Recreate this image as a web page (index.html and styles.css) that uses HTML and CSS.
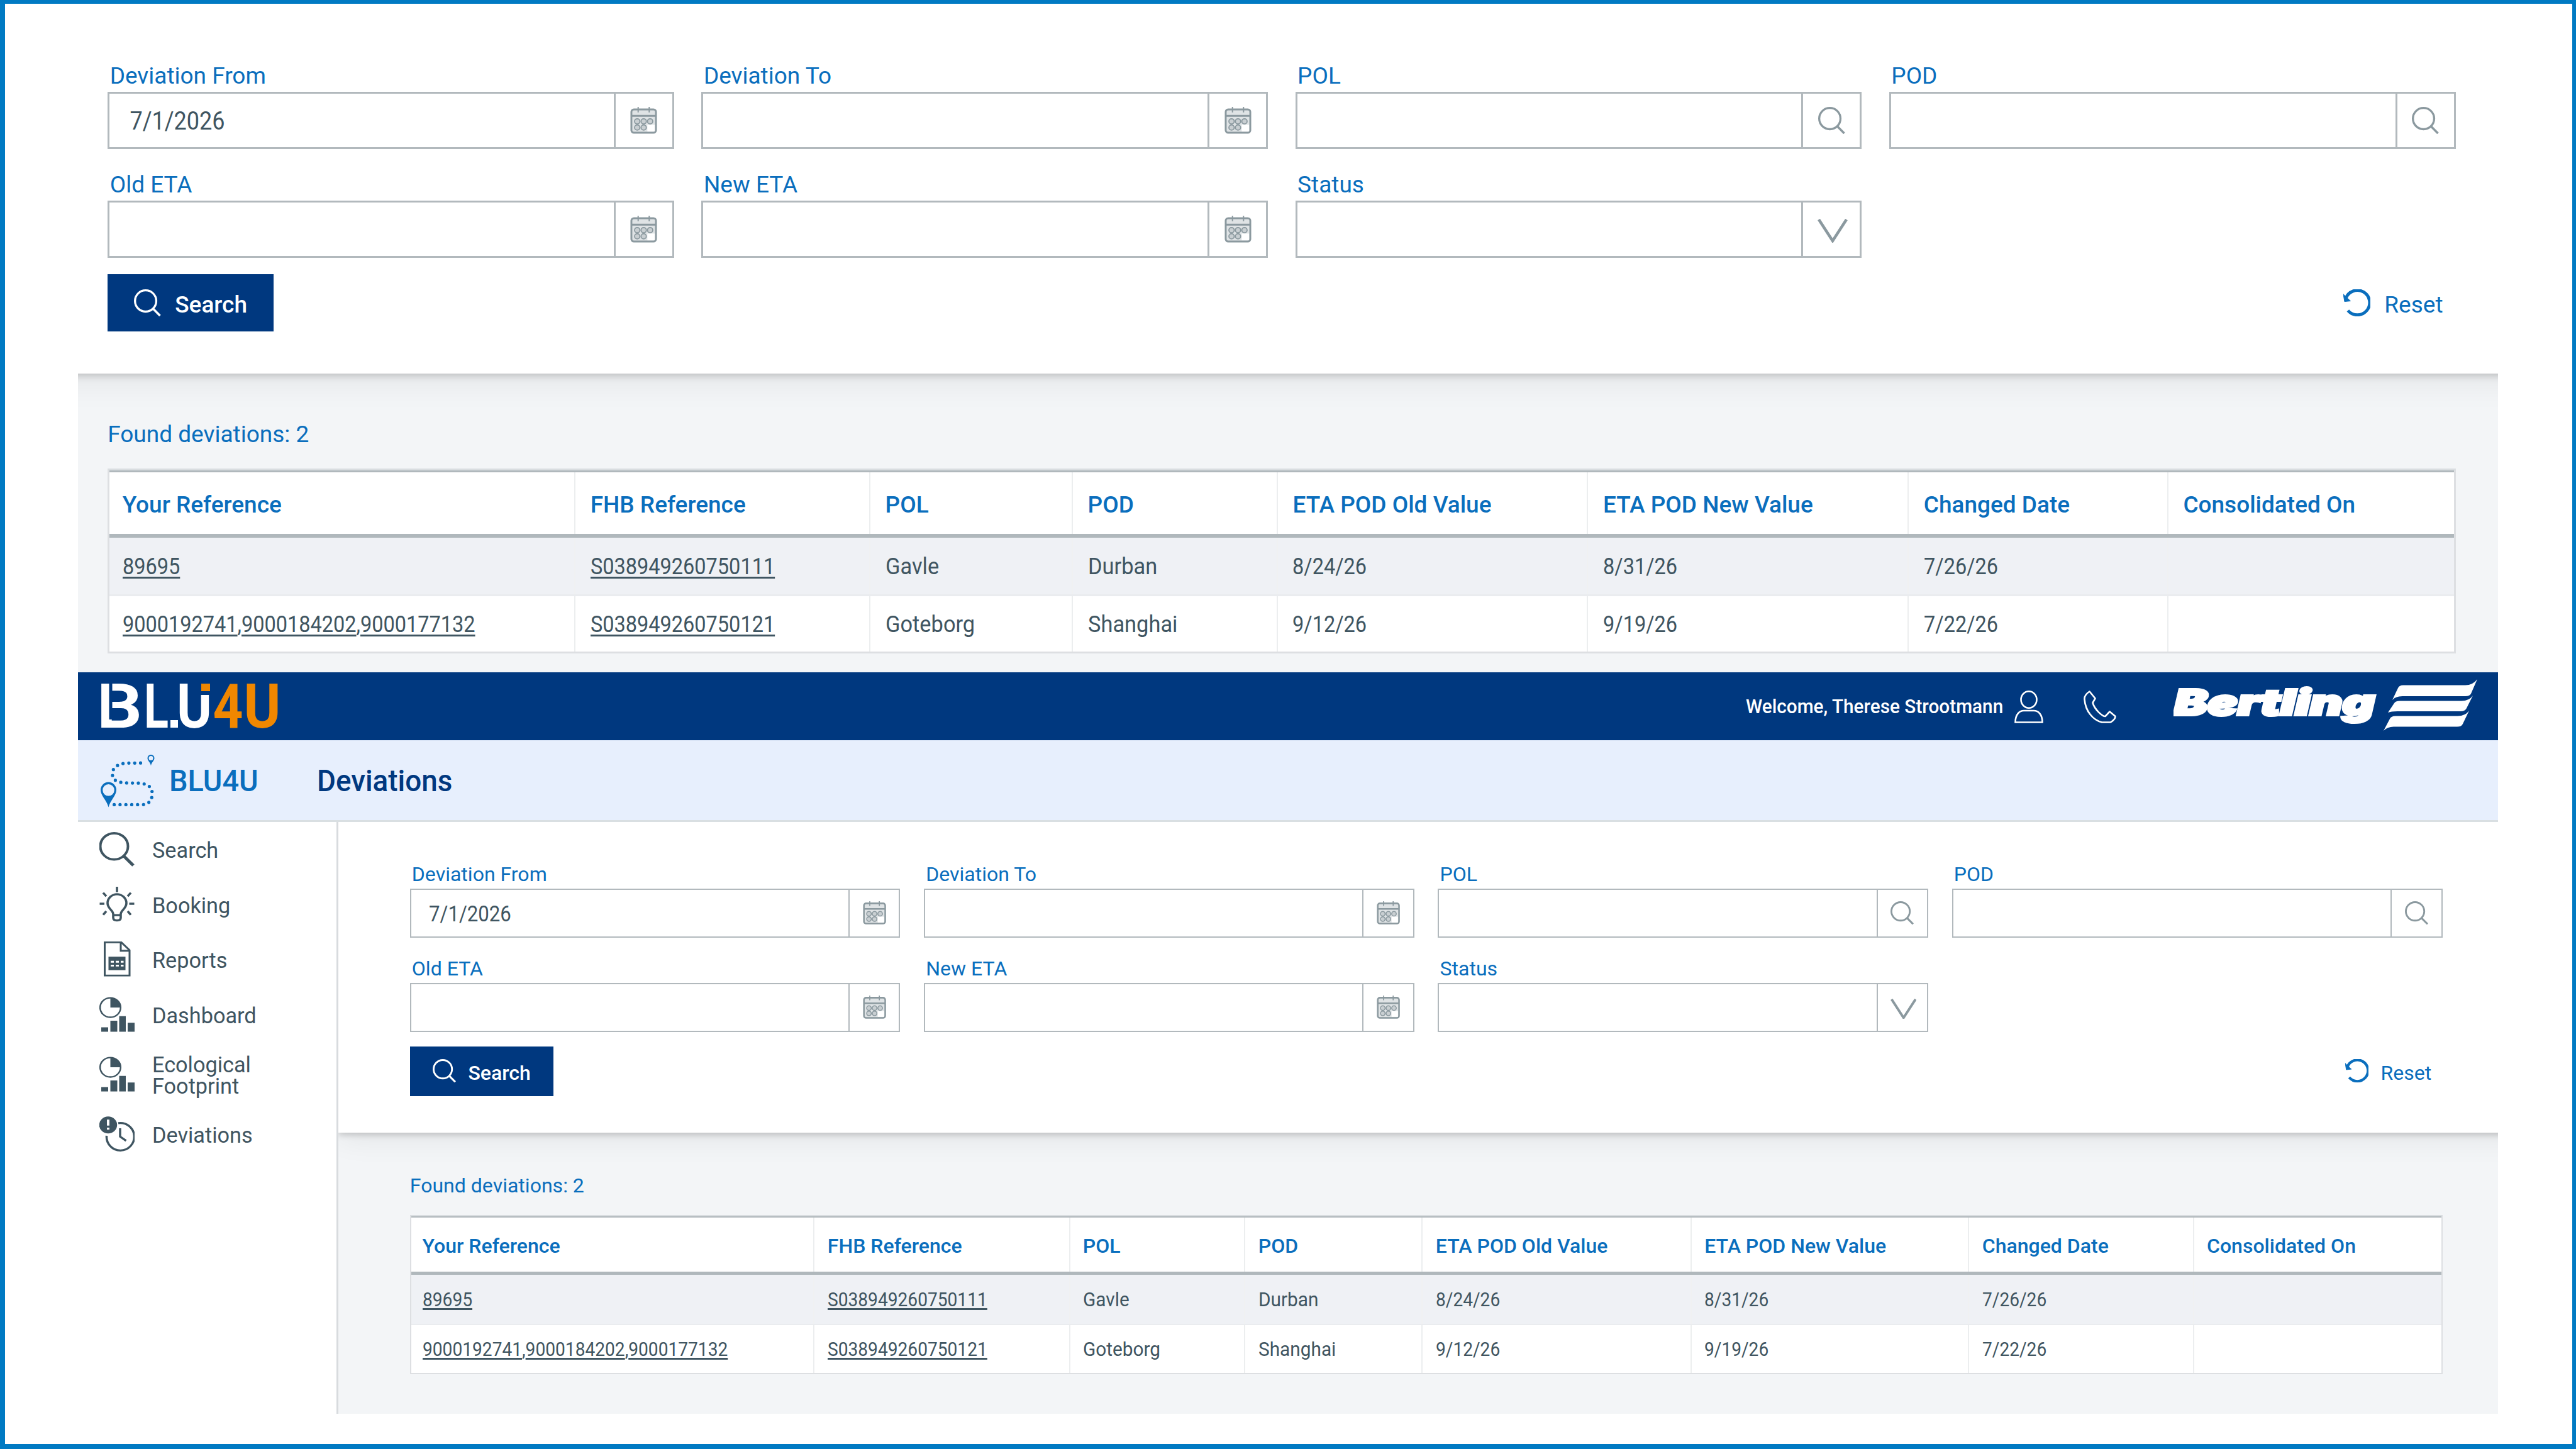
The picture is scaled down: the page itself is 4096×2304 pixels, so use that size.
FILE: index.html
```html
<!DOCTYPE html>
<html lang="en">
<head>
  <meta charset="UTF-8" />
  <meta name="viewport" content="width=device-width, initial-scale=1.0"/>
  <title>BLU4U - Deviations</title>
  <link rel="stylesheet" href="styles.css">
</head>
<body>
  <!-- Shared icons -->
  <svg width="0" height="0" class="sprite">
    <symbol id="i-search" viewBox="0 0 44 44">
      <circle cx="19" cy="19" r="17.3" fill="none" stroke="currentColor" stroke-width="3.4"/>
      <path d="M31 31.5L42.5 43" fill="none" stroke="currentColor" stroke-width="3.6"/>
    </symbol>
    <symbol id="i-cal" viewBox="0 0 44 44">
      <rect x="2" y="4" width="40" height="38" rx="4" fill="#dfe3e5" stroke="currentColor" stroke-width="3"/>
      <path d="M2 14.5H42" stroke="currentColor" stroke-width="3"/>
      <path d="M13 0V9M31 0V9" stroke="currentColor" stroke-width="2"/>
      <rect x="28" y="29" width="12" height="11" fill="#fff"/>
      <g fill="#c9cfd2" stroke="currentColor" stroke-width="1.8">
        <circle cx="11.5" cy="23.5" r="4.3"/><circle cx="22" cy="23.5" r="4.3"/><circle cx="32.5" cy="23.5" r="4.3"/>
        <circle cx="11.5" cy="33.5" r="4.3"/><circle cx="22" cy="33.5" r="4.3"/>
      </g>
    </symbol>
    <symbol id="i-down" viewBox="0 0 48 38">
      <path d="M2 1L24 35L46 1" fill="none" stroke="currentColor" stroke-width="4.5"/>
    </symbol>
    <symbol id="i-reset" viewBox="0 0 44 44">
      <path d="M4 15A20 20 0 1 1 7.500 34.500" fill="none" stroke="currentColor" stroke-width="5"/>
      <path d="M0 7.500L2 20L12 19" fill="currentColor" stroke="currentColor" stroke-width="1"/>
    </symbol>
    <symbol id="i-chart" viewBox="0 0 56 59">
      <circle cx="17.5" cy="18" r="16.3" fill="none" stroke="currentColor" stroke-width="2.5"/>
      <path d="M17.500 18V1.500A16.500 16.500 0 0 1 34 18Z" fill="currentColor"/>
      <path d="M3 51H14V58.500H3ZM17.500 40H28.500V58.500H17.500ZM31.500 32.500H42V58.500H31.500ZM45 43.500H56V58.500H45Z" fill="currentColor"/>
    </symbol>
  </svg>

  <div class="page">
    <!-- Deviations search, enlarged -->
    <section class="view view-large">
      <div class="panel">
        <div class="fields">
          <div class="field"><label>Deviation From</label><div class="input"><span class="value">7/1/2026</span><i class="addon"><svg class="ico"><use href="#i-cal"/></svg></i></div></div>
          <div class="field"><label>Deviation To</label><div class="input"><i class="addon"><svg class="ico"><use href="#i-cal"/></svg></i></div></div>
          <div class="field"><label>POL</label><div class="input"><i class="addon"><svg class="ico"><use href="#i-search"/></svg></i></div></div>
          <div class="field"><label>POD</label><div class="input"><i class="addon"><svg class="ico"><use href="#i-search"/></svg></i></div></div>
          <div class="field"><label>Old ETA</label><div class="input"><i class="addon"><svg class="ico"><use href="#i-cal"/></svg></i></div></div>
          <div class="field"><label>New ETA</label><div class="input"><i class="addon"><svg class="ico"><use href="#i-cal"/></svg></i></div></div>
          <div class="field"><label>Status</label><div class="input"><i class="addon"><svg class="ico ico-down"><use href="#i-down"/></svg></i></div></div>
        </div>
        <div class="actions">
          <button class="btn"><svg class="ico"><use href="#i-search"/></svg><span>Search</span></button>
          <a class="reset"><svg class="ico"><use href="#i-reset"/></svg><span>Reset</span></a>
        </div>
      </div>
      <div class="results">
        <p class="found">Found deviations: 2</p>
        <div class="table">
          <div class="row head">
            <div>Your Reference</div><div>FHB Reference</div><div>POL</div><div>POD</div><div>ETA POD Old Value</div><div>ETA POD New Value</div><div>Changed Date</div><div>Consolidated On</div>
          </div>
          <div class="row odd">
            <div><span class="num"><u>89695</u></span></div><div><span class="num"><u>S038949260750111</u></span></div><div><span>Gavle</span></div><div><span>Durban</span></div><div><span class="num">8/24/26</span></div><div><span class="num">8/31/26</span></div><div><span class="num">7/26/26</span></div><div></div>
          </div>
          <div class="row">
            <div><span class="num"><u>9000192741</u>,<u>9000184202</u>,<u>9000177132</u></span></div><div><span class="num"><u>S038949260750121</u></span></div><div><span>Goteborg</span></div><div><span>Shanghai</span></div><div><span class="num">9/12/26</span></div><div><span class="num">9/19/26</span></div><div><span class="num">7/22/26</span></div><div></div>
          </div>
        </div>
      </div>
    </section>

    <!-- Top bar -->
    <header class="topbar">
      <svg class="logo" viewBox="0 0 283 70">
        <g class="logo-text">
          <text x="-6" y="70" textLength="72" lengthAdjust="spacingAndGlyphs">B</text>
          <text x="69" y="70" textLength="39" lengthAdjust="spacingAndGlyphs">L</text>
          <text x="121" y="70" textLength="56" lengthAdjust="spacingAndGlyphs">U</text>
          <text class="orange" x="178.500" y="70" textLength="48" lengthAdjust="spacingAndGlyphs">4</text>
          <text class="orange" x="227.500" y="70" textLength="59" lengthAdjust="spacingAndGlyphs">U</text>
        </g>
        <rect x="111" y="58" width="12" height="12" fill="#fff"/>
        <rect x="13.500" y="-1" width="5" height="58" fill="#00387f"/>
        <rect x="158" y="-1" width="17" height="19" fill="#00387f"/>
        <rect x="160" y="0" width="14" height="12" fill="#f08700"/>
      </svg>
      <div class="user">
        <div class="welcome"><span>Welcome, Therese Strootmann</span></div>
        <svg class="ico-user" viewBox="0 0 46 52" fill="none" stroke="#fff" stroke-width="2.6">
          <ellipse cx="23" cy="14.500" rx="12.500" ry="13.200"/>
          <path d="M1.500 50.500C1.500 38 8 32 15 32H31C38 32 44.500 38 44.500 50.500Z"/>
        </svg>
        <svg class="ico-phone" viewBox="0 0 52 52" fill="none" stroke="#fff" stroke-width="2.600" stroke-linejoin="round">
          <path d="M9.500 1.500C4 5 1 9 1.500 14C3 33 15 47 29 50.500H43C47 48 50.500 45 50.500 41L41.500 33.500L34.500 41C30 41 18 31 14.500 19.500L18.500 12.500Z"/>
        </svg>
        <svg class="bertling" viewBox="0 0 484 84">
          <text class="bertling-text" x="1" y="57.500" textLength="319" lengthAdjust="spacingAndGlyphs">Bertling</text>
          <g fill="#fff" transform="translate(334 1)">
            <path d="M14 33L23 14Q25 9.500 31 9.500H130Q142 9.500 149 0L139 23Q137 27 130 27H30Q19 27 14 33Z"/>
            <path d="M7 53L17 38Q19 34.500 26 34.500H124Q136 34.500 142 26L132 46Q130 51 122 51H23Q12 51 7 53Z"/>
            <path d="M0 82L10 63Q12 58.500 19 58.500H118Q130 58.500 136 50L126 71Q124 75.500 117 75.500H16Q6 75.500 0 82Z"/>
          </g>
        </svg>
      </div>
    </header>

    <div class="subbar">
      <svg class="ico-route" viewBox="0 0 86 84" fill="none">
        <path d="M63.500 13.200L42 13.400C26 14 18.700 22 18.700 30C18.700 41 26 44 42 45L60 45.200C76 46 82 52 82 62C82 73 76 79.400 66 79.400H20" stroke="#0a6ebd" stroke-width="5.200" stroke-linecap="round" stroke-dasharray="0 9.300"/>
        <path fill-rule="evenodd" d="M12.500 83.500C10 73 0 65 0 56A12.500 12.500 0 0 1 25 56C25 65 15 73 12.500 83.500ZM12.500 47A9.300 9.300 0 1 0 12.500 65.600A9.300 9.300 0 1 0 12.500 47Z" fill="#0a6ebd"/>
        <path fill-rule="evenodd" d="M80 17.500C79 12 74.500 9.500 74.500 5.500A5.500 5.500 0 0 1 85.500 5.500C85.500 9.500 81 12 80 17.500ZM80 2A3.500 3.500 0 1 0 80 9A3.500 3.500 0 1 0 80 2Z" fill="#0a6ebd"/>
      </svg>
      <span class="app">BLU4U</span>
      <span class="title">Deviations</span>
    </div>

    <div class="content">
      <nav class="side">
        <a><svg viewBox="0 0 56 59" preserveAspectRatio="none"><circle cx="23.500" cy="25" r="22" fill="none" stroke="currentColor" stroke-width="4"/><path d="M38.500 41L54 57" stroke="currentColor" stroke-width="5"/></svg><span>Search</span></a>
        <a><svg viewBox="0 0 56 59" preserveAspectRatio="none" fill="none" stroke="currentColor" stroke-width="3.600">
          <path d="M22 46C22 39 13 37 13 27.500A15 15 0 0 1 43 27.500C43 37 34 39 34 46V52Q34 56.500 28 56.500Q22 56.500 22 52ZM22 47.500H34"/>
          <path d="M28 0V9M6 10L11 16M50 10L45 16M0.500 28.500H8M47.500 28.500H55.500M6 47L11 41M50 47L45 41"/>
        </svg><span>Booking</span></a>
        <a><svg viewBox="0 0 56 59" preserveAspectRatio="none">
          <path d="M8.500 1.500H35L48 14.500V57H8.500ZM34 1.500V15.500H48" fill="none" stroke="currentColor" stroke-width="3"/>
          <rect x="14.500" y="25.500" width="27" height="22.500" fill="currentColor"/>
          <path d="M18 34H23M26 34H31M34 34H38.500M18 40.500H23M26 40.500H31M34 40.500H38.500" stroke="#fff" stroke-width="3"/>
        </svg><span>Reports</span></a>
        <a><svg viewBox="0 0 56 59" preserveAspectRatio="none"><use href="#i-chart" width="56" height="59"/></svg><span>Dashboard</span></a>
        <a class="tall"><svg viewBox="0 0 56 59" preserveAspectRatio="none"><use href="#i-chart" width="56" height="59"/></svg><span>Ecological<br>Footprint</span></a>
        <a><svg viewBox="0 0 56 59" preserveAspectRatio="none">
          <circle cx="14" cy="14.500" r="14.200" fill="currentColor"/>
          <path d="M14 5.500V15.500M14 19V22.500" stroke="#fff" stroke-width="4"/>
          <path d="M30 11.500A22 23 0 1 1 11.500 32.500" fill="none" stroke="currentColor" stroke-width="3.500"/>
          <path d="M33 20V34L42.500 41" fill="none" stroke="currentColor" stroke-width="3.500"/>
        </svg><span>Deviations</span></a>
      </nav>

      <section class="view view-small">
        <div class="panel">
          <div class="fields">
            <div class="field"><label>Deviation From</label><div class="input"><span class="value">7/1/2026</span><i class="addon"><svg class="ico"><use href="#i-cal"/></svg></i></div></div>
            <div class="field"><label>Deviation To</label><div class="input"><i class="addon"><svg class="ico"><use href="#i-cal"/></svg></i></div></div>
            <div class="field"><label>POL</label><div class="input"><i class="addon"><svg class="ico"><use href="#i-search"/></svg></i></div></div>
            <div class="field"><label>POD</label><div class="input"><i class="addon"><svg class="ico"><use href="#i-search"/></svg></i></div></div>
            <div class="field"><label>Old ETA</label><div class="input"><i class="addon"><svg class="ico"><use href="#i-cal"/></svg></i></div></div>
            <div class="field"><label>New ETA</label><div class="input"><i class="addon"><svg class="ico"><use href="#i-cal"/></svg></i></div></div>
            <div class="field"><label>Status</label><div class="input"><i class="addon"><svg class="ico ico-down"><use href="#i-down"/></svg></i></div></div>
          </div>
          <div class="actions">
            <button class="btn"><svg class="ico"><use href="#i-search"/></svg><span>Search</span></button>
            <a class="reset"><svg class="ico"><use href="#i-reset"/></svg><span>Reset</span></a>
          </div>
        </div>
        <div class="results">
          <p class="found">Found deviations: 2</p>
          <div class="table">
            <div class="row head">
              <div>Your Reference</div><div>FHB Reference</div><div>POL</div><div>POD</div><div>ETA POD Old Value</div><div>ETA POD New Value</div><div>Changed Date</div><div>Consolidated On</div>
            </div>
            <div class="row odd">
              <div><span class="num"><u>89695</u></span></div><div><span class="num"><u>S038949260750111</u></span></div><div><span>Gavle</span></div><div><span>Durban</span></div><div><span class="num">8/24/26</span></div><div><span class="num">8/31/26</span></div><div><span class="num">7/26/26</span></div><div></div>
            </div>
            <div class="row">
              <div><span class="num"><u>9000192741</u>,<u>9000184202</u>,<u>9000177132</u></span></div><div><span class="num"><u>S038949260750121</u></span></div><div><span>Goteborg</span></div><div><span>Shanghai</span></div><div><span class="num">9/12/26</span></div><div><span class="num">9/19/26</span></div><div><span class="num">7/22/26</span></div><div></div>
            </div>
          </div>
        </div>
      </section>
    </div>
  </div>
</body>
</html>
```
FILE: styles.css
```css
* { box-sizing: border-box; }
body {
  margin: 0;
  background: #fff;
  font-family: Roboto, 'Liberation Sans', sans-serif;
  color: #3f5561;
}
.sprite { position: absolute; }
.page {
  width: 4096px;
  height: 2304px;
  border: solid #007ac3;
  border-width: 6px 6px 8px 8px;
  padding: 0 118px 0 115.5px;
  display: flex;
  flex-direction: column;
  overflow: hidden;
}

/* Deviations view, --k is the zoom of the view */
.view {
  background: #f3f5f7;
  overflow: hidden;
}
.view-large {
  --k: 1;
  height: 1063px;
  flex: none;
}
.view-small {
  --k: .8662;
  flex: 1;
}
.panel {
  background: #fff;
  box-shadow: 0 calc(var(--k) * 3px) calc(var(--k) * 12px) rgba(0,0,0,.2), 0 calc(var(--k) * 12px) calc(var(--k) * 50px) rgba(0,0,0,.07);
}
.view-large .panel {
  height: 587.7px;
  margin: 0 -80px;
  padding: 92.7px 147.500px 0 127.700px;
}
.view-small .panel {
  height: 493.500px;
  margin-right: -80px;
  padding: 64.500px 168.500px 0 113.800px;
}
.fields {
  display: grid;
  grid-template-columns: repeat(4, 1fr);
  column-gap: calc(var(--k) * 43.500px);
  row-gap: calc(var(--k) * 35.200px);
}
.field label {
  display: block;
  font-size: calc(var(--k) * 37px);
  line-height: calc(var(--k) * 42px);
  padding: calc(var(--k) * 1px) 0 0 calc(var(--k) * 3.5px);
  margin-bottom: calc(var(--k) * 4.500px);
  color: #0a6ebd;
}
.input {
  height: calc(var(--k) * 90.500px);
  border: calc(var(--k) * 3px) solid #b2b9bd;
  display: flex;
  align-items: center;
}
.value {
  font-size: calc(var(--k) * 40px);
  padding-left: calc(var(--k) * 36px);
  padding-top: calc(var(--k) * 3px);
  transform: scaleX(.9);
  transform-origin: 0 50%;
}
.addon {
  margin-left: auto;
  width: calc(var(--k) * 93px);
  height: 100%;
  border-left: calc(var(--k) * 3px) solid #b2b9bd;
  display: flex;
  align-items: center;
  justify-content: center;
  color: #8b999f;
}
.ico {
  width: calc(var(--k) * 43px);
  height: calc(var(--k) * 43px);
}
.ico-down {
  width: calc(var(--k) * 48px);
  height: calc(var(--k) * 38px);
  margin: calc(var(--k) * 5px) 0 0 calc(var(--k) * 4px);
}
.actions {
  display: flex;
  justify-content: space-between;
  align-items: flex-start;
  margin-top: calc(var(--k) * 26.200px);
}
.btn, .reset {
  height: calc(var(--k) * 91px);
  display: flex;
  align-items: center;
  font-family: inherit;
  font-size: calc(var(--k) * 37px);
}
.btn {
  width: calc(var(--k) * 263.500px);
  background: #00387f;
  color: #fff;
  border: none;
  font-weight: 500;
  padding: 0 0 0 calc(var(--k) * 42px);
}
.btn span, .reset span { padding-top: calc(var(--k) * 6px); }
.btn span { margin-left: calc(var(--k) * 22px); }
.reset {
  color: #0a6ebd;
  padding-right: calc(var(--k) * 20px);
}
.reset span { margin-left: calc(var(--k) * 22.5px); }

/* Results */
.view-large .results { padding: 0 67.500px 0 47.700px; }
.view-small .results { padding: 0 88.500px 0 113.800px; }
.found {
  margin: 0;
  padding-top: calc(var(--k) * 76.500px);
  height: calc(var(--k) * 151.800px);
  font-size: calc(var(--k) * 37px);
  line-height: calc(var(--k) * 42px);
  color: #0a6ebd;
}
.table {
  border: calc(var(--k) * 3px) solid #dddfe2;
  border-top-color: #d9dde0;
  background: #fff;
  font-size: calc(var(--k) * 37px);
}
.row {
  display: grid;
  grid-template-columns: 19.88fr 12.58fr 8.64fr 8.74fr 13.24fr 13.68fr 11.07fr 12.17fr;
  height: calc(var(--k) * 87.500px);
}
.row > div {
  display: flex;
  align-items: center;
  padding-left: calc(var(--k) * 23.5px);
  border-right: 2px solid #eceeef;
  white-space: nowrap;
}
.row > div:first-child { padding-left: calc(var(--k) * 20.5px); }
.row > div:last-child { border-right: none; }
.row.head {
  height: calc(var(--k) * 107px);
  border-top: calc(var(--k) * 3px) solid #b0b8bc;
  border-bottom: calc(var(--k) * 6.500px) solid #b0b8bc;
  color: #0a6ebd;
  font-weight: 500;
}
.row.head > div { padding-top: calc(var(--k) * 4px); }
.row.odd {
  height: calc(var(--k) * 93px);
  background: #eff1f5;
  border-bottom: calc(var(--k) * 3px) solid #eaecef;
}
.row.odd > div { border-right-color: #f0f1f2; }
.row span {
  transform: scaleX(.93);
  transform-origin: 0 50%;
}
.row .num { transform: scaleX(.878); }
.row u {
  text-decoration-thickness: calc(var(--k) * 3px);
  text-underline-offset: calc(var(--k) * 4px);
}

/* Top bar */
.topbar {
  flex: none;
  height: 108px;
  background: #00387f;
  display: flex;
  justify-content: space-between;
  padding-left: 36.500px;
}
.logo {
  width: 283px;
  height: 70px;
  margin-top: 18px;
  overflow: visible;
}
.logo-text {
  font-size: 98.500px;
  font-weight: 700;
  fill: #fff;
}
.orange { fill: #f08700; }
.user { display: flex; }
.welcome {
  color: #fff;
  font-size: 32px;
  font-weight: 500;
  line-height: 38px;
  margin-top: 35px;
  width: 427px;
  white-space: nowrap;
}
.welcome span {
  display: inline-block;
  transform: scaleX(.93);
  transform-origin: 0 50%;
}
.ico-user {
  width: 46px;
  height: 52px;
  margin-top: 29px;
}
.ico-phone {
  width: 52px;
  height: 52px;
  margin: 29px 91px 0 64px;
}
.bertling {
  width: 484px;
  height: 84px;
  margin: 10px 32px 0 0;
}
.bertling-text {
  font-family: Inter, 'Liberation Sans', sans-serif;
  font-size: 56px;
  font-weight: 900;
  font-style: italic;
  fill: #fff;
  stroke: #fff;
  stroke-width: 4px;
}

.subbar {
  flex: none;
  height: 130px;
  background: #e7effd;
  border-bottom: 3px solid #d9dfe2;
  padding-left: 36.500px;
  display: flex;
  font-size: 48.500px;
  font-weight: 500;
  line-height: 56px;
}
.ico-route {
  width: 86px;
  height: 84px;
  margin-top: 23px;
}
.app, .title {
  margin-top: 37px;
  transform: scaleX(.945);
  transform-origin: 0 50%;
}
.app {
  color: #0a6ebd;
  margin-left: 23px;
  width: 235px;
  transform: scaleX(.965);
}
.title { color: #00387f; }

/* Side navigation */
.content {
  display: flex;
  height: 941px;
}
.side {
  width: 414.500px;
  border-right: 3px solid #d8dbde;
  background: #fff;
}
.side a {
  display: flex;
  align-items: center;
  height: 87.800px;
  padding-left: 34px;
  font-size: 35.500px;
  line-height: 34px;
}
.side a:first-child { margin-top: -1px; }
.side a.tall { height: 101.600px; }
.side svg {
  width: 56px;
  height: 56px;
}
.side span {
  margin-left: 28px;
  padding-top: 4px;
  transform: scaleX(.965);
  transform-origin: 0 50%;
}
```
